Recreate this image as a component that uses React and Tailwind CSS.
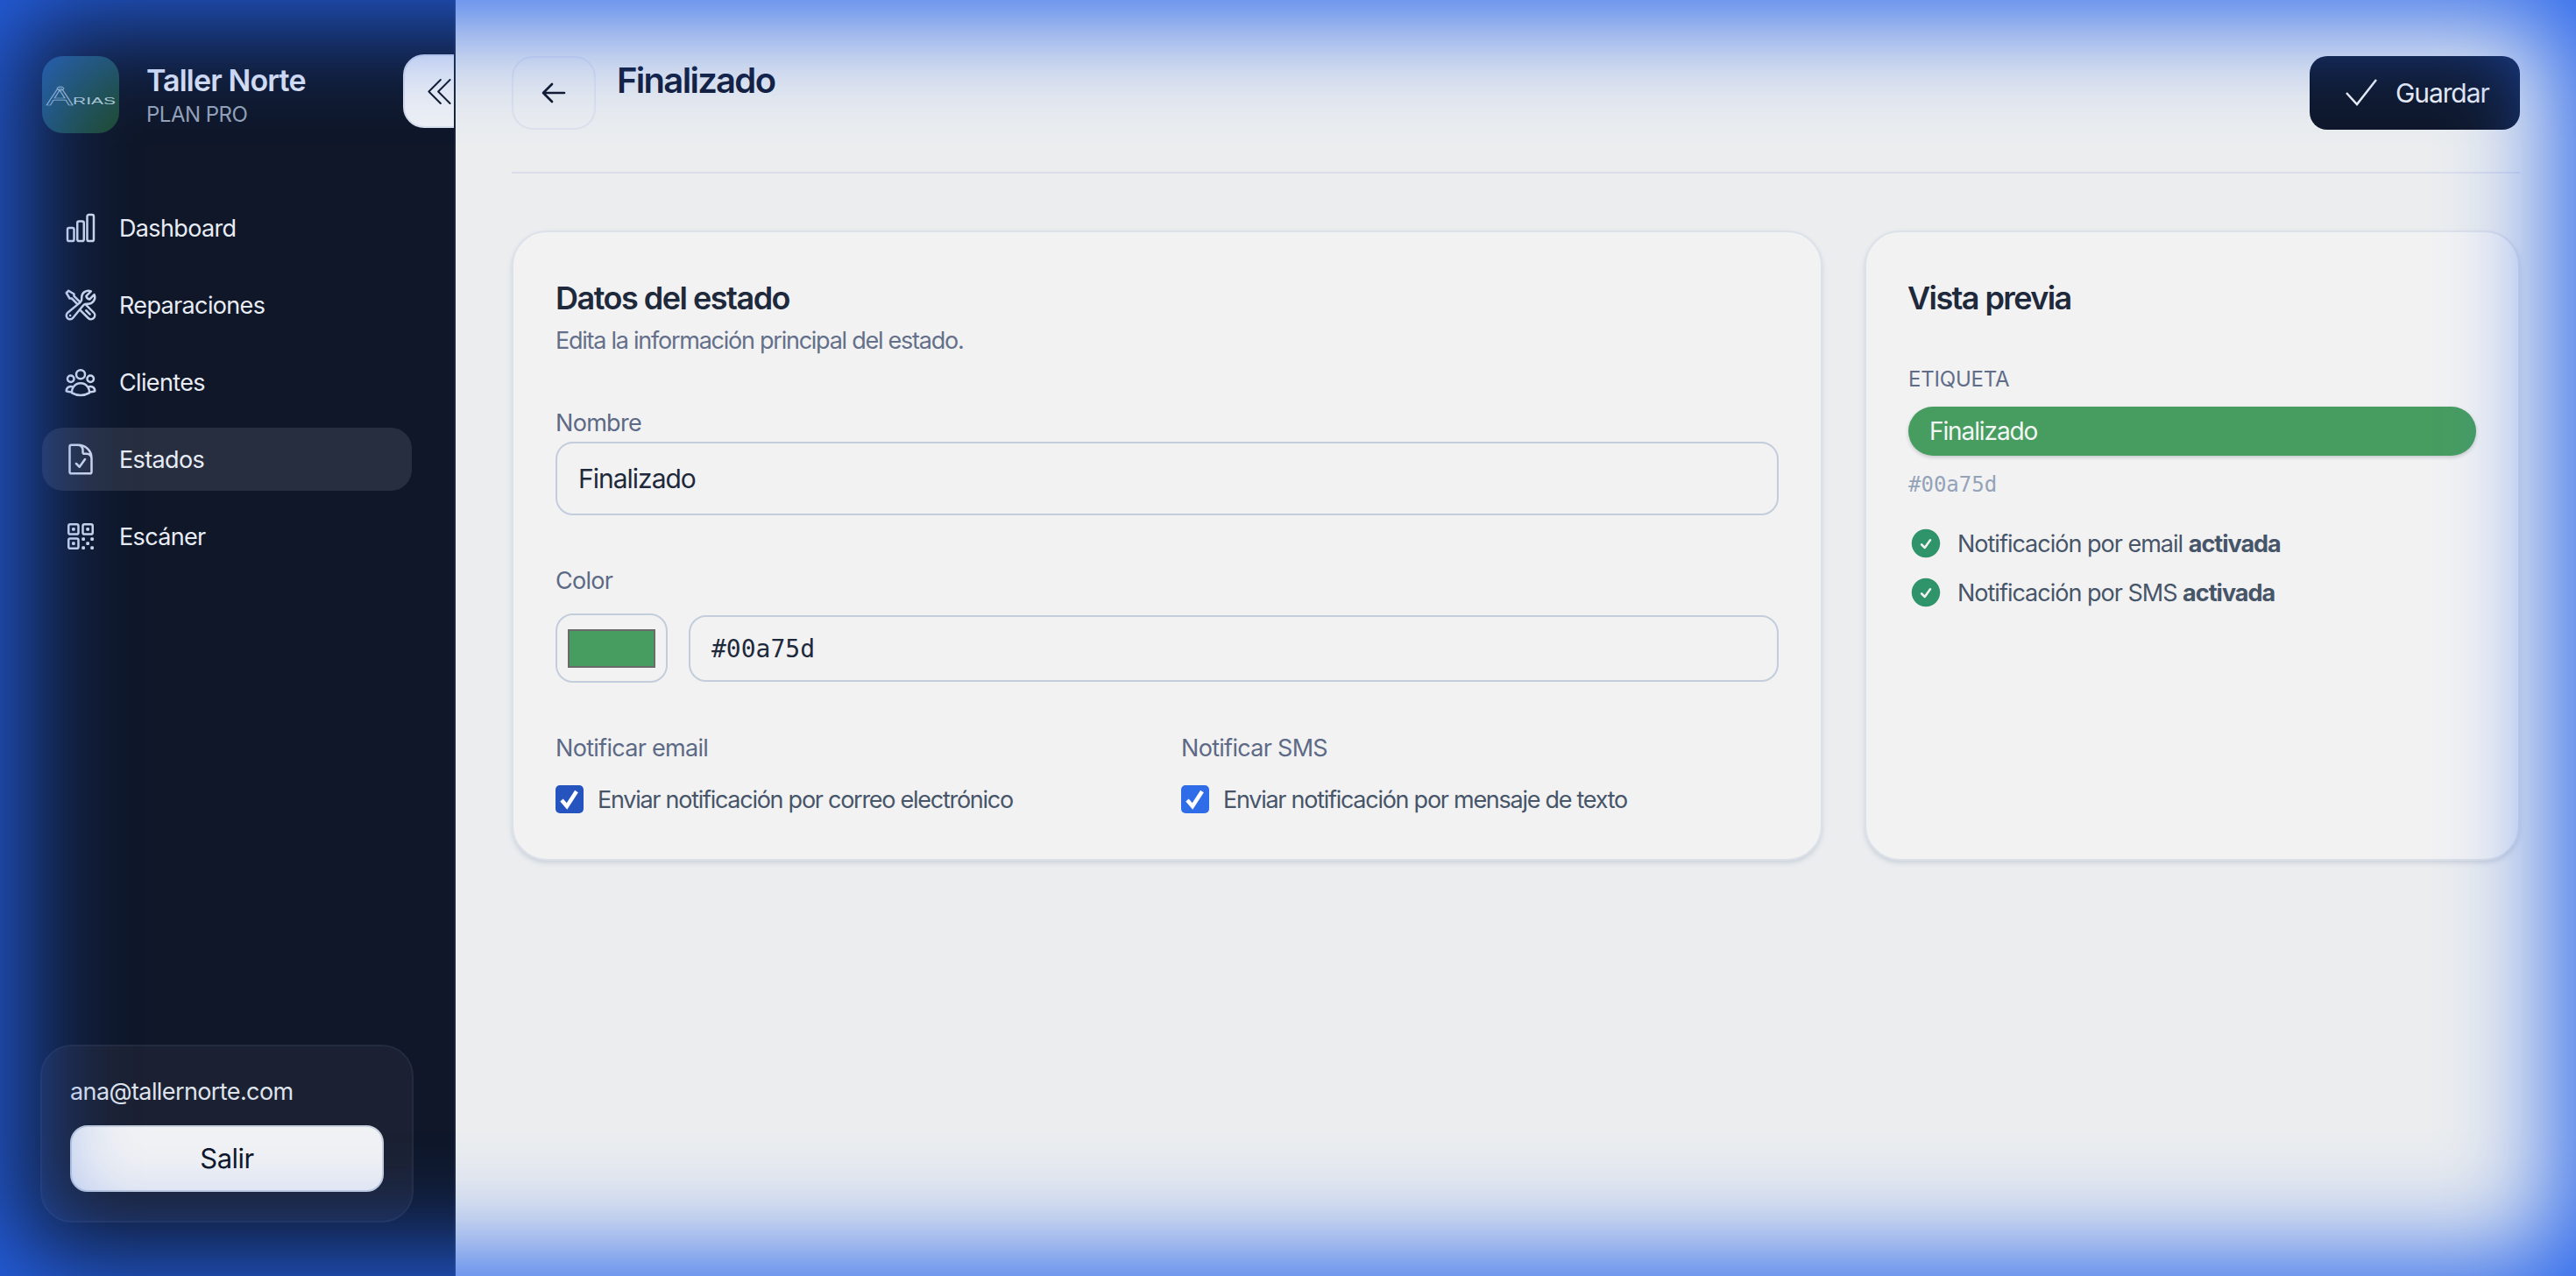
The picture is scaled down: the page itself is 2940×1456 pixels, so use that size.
import React from "react";
import {
  HiOutlineChartBar,
  HiOutlineWrenchScrewdriver,
  HiOutlineUserGroup,
  HiOutlineDocumentCheck,
  HiOutlineQrCode,
  HiOutlineChevronDoubleLeft,
  HiOutlineArrowLeft,
  HiCheckCircle,
} from "react-icons/hi2";

const NAV = [
  { label: "Dashboard", icon: HiOutlineChartBar },
  { label: "Reparaciones", icon: HiOutlineWrenchScrewdriver },
  { label: "Clientes", icon: HiOutlineUserGroup },
  { label: "Estados", icon: HiOutlineDocumentCheck, active: true },
  { label: "Escáner", icon: HiOutlineQrCode },
];

const Logo = () => (
  <div className="w-[88px] h-[88px] shrink-0 rounded-[24px] bg-gradient-to-br from-[#285a78] to-[#1f4a2f] flex items-center justify-center ml-[2px]">
    <svg width="80" height="44" viewBox="0 -7 80 44">
      <ellipse cx="17" cy="8" rx="4" ry="2" fill="none" stroke="#b8d0d4" strokeWidth="1" />
      <text x="1" y="27" fontFamily="Liberation Sans" fontSize="28" fill="none" stroke="#b8d0d4" strokeWidth="0.7" textLength="30" lengthAdjust="spacingAndGlyphs">A</text>
      <text x="31" y="26" fontFamily="Liberation Sans" fontSize="11" fill="#b8d0d4" textLength="49" lengthAdjust="spacingAndGlyphs">RIAS</text>
    </svg>
  </div>
);

const Sidebar = () => (
  <aside className="relative w-[520px] shrink-0 h-full bg-[#0f1729] border-r-2 border-[#1a2438] px-[46px] pt-[64px] pb-[61px] flex flex-col overflow-hidden">
    <div className="flex items-center gap-[31px]">
      <Logo />
      <div>
        <div className="text-[34px] leading-[46px] font-semibold tracking-[-0.85px] text-[#e2e8f5]">Taller Norte</div>
        <div className="text-[24px] leading-[32px] tracking-[-0.5px] text-[#94a3b8]">PLAN PRO</div>
      </div>
    </div>
    <button className="absolute left-[460px] top-[62px] w-[90px] h-[84px] rounded-l-[24px] bg-[#eef0f4] border-2 border-[#d8deea] flex items-center pl-[18px] text-[#0f1729]">
      <HiOutlineChevronDoubleLeft size={43} strokeWidth={1.1} />
    </button>
    <nav className="mt-[72px] mx-[2px] flex flex-col gap-[16px]">
      {NAV.map((item) => {
        const Icon = item.icon;
        return (
          <a
            key={item.label}
            className={`h-[72px] rounded-[24px] px-[24px] flex items-center gap-[24px] text-[27px] tracking-[-0.65px] text-[#e8ecf4] ${item.active ? "bg-[#272e3f]" : ""}`}
          >
            <Icon size={40} className="text-[#d5dcea] shrink-0" />
            <span className="pt-[2px]">{item.label}</span>
          </a>
        );
      })}
    </nav>
    <div className="mt-auto h-[203px] rounded-[36px] border-2 border-[#232b3e] bg-[#1b2132] px-[32px] pt-[32px]">
      <div className="text-[27px] leading-[40px] tracking-[-0.6px] text-[#dfe3ec]">ana@tallernorte.com</div>
      <button className="mt-[18px] w-full h-[76px] rounded-[20px] bg-[#f1f2f4] border-2 border-[#c9d1de] text-[31px] tracking-[-0.5px] text-[#0f1729]">
        Salir
      </button>
    </div>
  </aside>
);

const Label = ({ children }) => (
  <div className="h-[40px] leading-[42px] text-[27px] tracking-[-0.7px] text-[#5d6a85]">{children}</div>
);

const Check = ({ color, children }) => (
  <label className="flex items-center gap-[16px] mt-[23px] h-[32px] text-[27px] tracking-[-1.27px] text-[#475569]">
    <span className={`w-[32px] h-[32px] rounded-[5px] shrink-0 text-white ${color}`}>
      <svg width="32" height="32" viewBox="0 0 32 32" fill="none" stroke="currentColor" strokeWidth="4.5">
        <path d="M7 17 L13 24 L24 7" />
      </svg>
    </span>
    <span className="pt-[3px]">{children}</span>
  </label>
);

const Card = ({ children }) => (
  <section className="rounded-[40px] border-2 border-[#dde1e9] bg-[#f2f2f3] shadow-[0_3px_5px_rgba(148,163,184,0.35)] px-[48px] pt-[48px] pb-[52px]">
    {children}
  </section>
);

const Notice = ({ children }) => (
  <div className="flex items-center gap-[16px] h-[40px] mb-[16px] text-[27px] tracking-[-1px] text-[#475569]">
    <HiCheckCircle size={40} className="text-[#2f946a] shrink-0" />
    <span className="pt-[2px]">{children} <b className="font-bold">activada</b></span>
  </div>
);

const App = () => (
  <div className="relative flex w-full h-screen overflow-hidden bg-[#ebedef] font-['Inter',sans-serif]">
    <Sidebar />
    <main className="flex-1 px-[64px] pt-[64px]">
      <header className="h-[134px] border-b-2 border-[#d9deea] flex items-start">
        <button className="w-[96px] h-[84px] rounded-[24px] border-2 border-[#dde2ec] flex items-center justify-center text-[#0f1729]">
          <HiOutlineArrowLeft size={32} strokeWidth={2} />
        </button>
        <h1 className="ml-[24px] text-[40px] leading-[56px] font-semibold tracking-[-1.7px] text-[#131c36]">Finalizado</h1>
        <button className="ml-auto w-[240px] h-[84px] rounded-[20px] bg-[#0f1729] flex items-center gap-[19px] pl-[39px] text-[30px] tracking-[-1.1px] text-[#eef1f6]">
          <svg width="40" height="40" viewBox="0 0 40 40" fill="none" stroke="currentColor" strokeWidth="2.5" className="shrink-0">
            <path d="M3 20 L15 33 L37 5" />
          </svg>
          Guardar
        </button>
      </header>
      <div className="mt-[65px] grid grid-cols-[2fr_1fr] gap-[48px]">
        <Card>
          <h2 className="text-[36px] leading-[54px] font-semibold tracking-[-1.5px] text-[#1e293b]">Datos del estado</h2>
          <p className="mt-[2px] h-[40px] leading-[40px] text-[27px] tracking-[-1.25px] text-[#64708a]">Edita la información principal del estado.</p>
          <div className="mt-[53px]"><Label>Nombre</Label></div>
          <div className="mt-[2px] h-[84px] rounded-[20px] border-2 border-[#c3cddb] px-[24px] flex items-center text-[30px] tracking-[-1px] text-[#1e293b]">Finalizado</div>
          <div className="mt-[54px]"><Label>Color</Label></div>
          <div className="mt-[18px] flex items-center gap-[24px]">
            <div className="w-[128px] h-[79px] rounded-[20px] border-2 border-[#c3cddb] flex items-center justify-center shrink-0">
              <div className="w-[100px] h-[44px] bg-[#479d60] border-2 border-[#6b6b6b]" />
            </div>
            <div className="flex-1 h-[76px] rounded-[20px] border-2 border-[#c3cddb] px-[24px] pt-[2px] flex items-center font-['DejaVu_Sans_Mono',monospace] text-[28px] text-[#1e293b]">#00a75d</div>
          </div>
          <div className="mt-[54px] grid grid-cols-2 gap-[32px]">
            <div>
              <Label>Notificar email</Label>
              <Check color="bg-[#2554bf]">Enviar notificación por correo electrónico</Check>
            </div>
            <div>
              <Label>Notificar SMS</Label>
              <Check color="bg-[#2f6de8]">Enviar notificación por mensaje de texto</Check>
            </div>
          </div>
        </Card>
        <Card>
          <h2 className="-ml-[1px] text-[36px] leading-[54px] font-semibold tracking-[-1.6px] text-[#1e293b]">Vista previa</h2>
          <div className="mt-[47px] h-[36px] leading-[38px] text-[24px] tracking-[-0.2px] text-[#5f6d88]">ETIQUETA</div>
          <div className="mt-[14px] h-[56px] rounded-full bg-[#479d60] shadow-[0_2px_4px_rgba(15,23,42,0.2)] px-[24px] flex items-center text-[28px] tracking-[-1.1px] text-[#f4f6f4]">Finalizado</div>
          <div className="mt-[14px] h-[36px] leading-[38px] font-['DejaVu_Sans_Mono',monospace] text-[24px] text-[#94a3b8]">#00a75d</div>
          <div className="mt-[30px]">
            <Notice>Notificación por email</Notice>
            <Notice>Notificación por SMS</Notice>
          </div>
        </Card>
      </div>
    </main>
    <div className="absolute inset-0 pointer-events-none shadow-[inset_0_0_120px_20px_#2563eb]" />
  </div>
);

export default App;
